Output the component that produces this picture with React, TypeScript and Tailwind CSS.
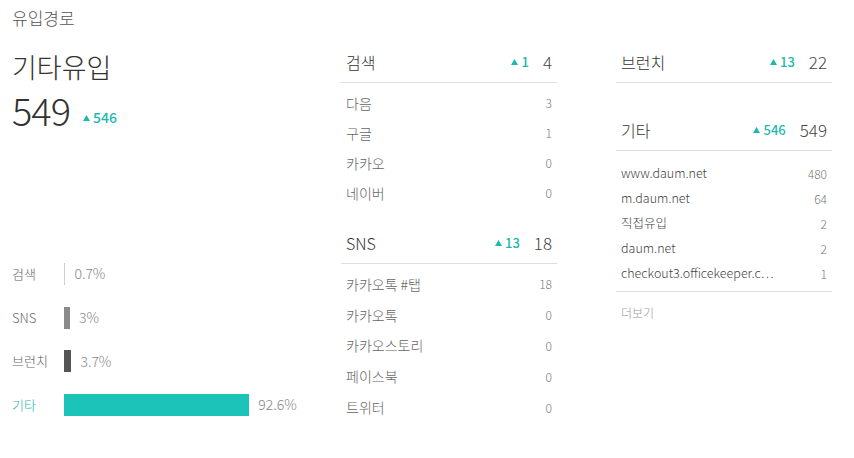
import React from "react";

// ---- 유입경로 데이터 ----
interface Row {
  label: string;
  value: number;
}

interface Section {
  title: string;
  diff?: number;
  total: number;
  rows: Row[];
}

const bars = [
  { label: "검색", pct: 0.7, color: "bg-[#cfcfcf]", text: "0.7%" },
  { label: "SNS", pct: 3, color: "bg-[#8a8a8a]", text: "3%" },
  { label: "브런치", pct: 3.7, color: "bg-[#555555]", text: "3.7%" },
  { label: "기타", pct: 92.6, color: "bg-[#1cc3b9]", text: "92.6%", active: true },
];

const search: Section = {
  title: "검색",
  diff: 1,
  total: 4,
  rows: [
    { label: "다음", value: 3 },
    { label: "구글", value: 1 },
    { label: "카카오", value: 0 },
    { label: "네이버", value: 0 },
  ],
};

const sns: Section = {
  title: "SNS",
  diff: 13,
  total: 18,
  rows: [
    { label: "카카오톡 #탭", value: 18 },
    { label: "카카오톡", value: 0 },
    { label: "카카오스토리", value: 0 },
    { label: "페이스북", value: 0 },
    { label: "트위터", value: 0 },
  ],
};

const etc: Row[] = [
  { label: "www.daum.net", value: 480 },
  { label: "m.daum.net", value: 64 },
  { label: "직접유입", value: 2 },
  { label: "daum.net", value: 2 },
  { label: "checkout3.officekeeper.c\u22EF", value: 1 },
];

function Up({ n, big }: { n: number; big?: boolean }) {
  return (
    <span
      className={`flex items-center gap-[3px] text-[#1cb9b0] font-medium ${
        big ? "text-[14px]" : "text-[13px]"
      }`}
    >
      <svg width="7" height="6" viewBox="0 0 7 6">
        <path d="M3.5 0L7 6H0z" fill="#1cb9b0" />
      </svg>
      {n}
    </span>
  );
}

function Header({ title, diff, total }: { title: string; diff?: number; total: number }) {
  return (
    <div className="h-[42px] px-[5px] flex items-center justify-between border-b border-[#dddddd]">
      <span className="text-[16px] font-light text-[#333]">{title}</span>
      <span className="flex items-center gap-[14px]">
        {diff !== undefined && <Up n={diff} />}
        <span className="text-[17px] font-light text-[#444]">{total}</span>
      </span>
    </div>
  );
}

function ListSection({ s, rowH }: { s: Section; rowH: string }) {
  return (
    <div>
      <Header title={s.title} diff={s.diff} total={s.total} />
      <div className="pt-[5px]">
        {s.rows.map((r) => (
          <div key={r.label} className={`${rowH} px-[5px] flex items-center justify-between`}>
            <span className="text-[14px] font-light text-[#666]">{r.label}</span>
            <span className="text-[12px] font-light text-[#777]">{r.value}</span>
          </div>
        ))}
      </div>
    </div>
  );
}

export default function App() {
  return (
    <div className="w-[854px] h-[458px] bg-white px-3 pt-[7px] font-['Noto_Sans_CJK_KR','Noto_Sans',sans-serif] overflow-hidden">
      <div className="text-[17px] leading-[22px] font-light text-[#555]">유입경로</div>

      <div className="flex mt-[12px]">
        {/* 왼쪽: 요약 + 막대 */}
        <div className="w-[329px]">
          <div className="pt-[9px] text-[27px] leading-[34px] font-light text-[#333]">기타유입</div>
          <div className="flex items-end gap-[13px] h-[46px]">
            <span className="text-[38px] leading-[40px] font-light text-[#333] tracking-[-1px]">549</span>
            <span className="pb-[2px]">
              <Up n={546} big />
            </span>
          </div>

          <div className="mt-[122px]">
            {bars.map((b) => (
              <div key={b.label} className="h-[43.7px] flex items-center">
                <span
                  className={`w-[52px] text-[13px] font-light ${b.active ? "text-[#1cb9b0]" : "text-[#666]"}`}
                >
                  {b.label}
                </span>
                <span
                  className={`h-[22px] ${b.color}`}
                  style={{ width: Math.max(1, b.pct * 2) }}
                />
                <span className="ml-[9px] text-[14px] font-light text-[#888]">{b.text}</span>
              </div>
            ))}
          </div>
        </div>

        {/* 가운데: 검색 / SNS */}
        <div className="w-[216px]">
          <ListSection s={search} rowH="h-[30px]" />
          <div className="mt-[14px]">
            <ListSection s={sns} rowH="h-[30.8px]" />
          </div>
        </div>

        {/* 오른쪽: 브런치 / 기타 */}
        <div className="w-[216px] ml-[59px]">
          <Header title="브런치" diff={13} total={22} />
          <div className="mt-[26px]">
            <Header title="기타" diff={546} total={549} />
          </div>
          <div className="pt-[10px] pb-[5px] border-b border-[#dddddd]">
            {etc.map((r) => (
              <div key={r.label} className="h-[25px] px-[5px] flex items-center justify-between">
                <span className="text-[12.5px] font-light text-[#444]">{r.label}</span>
                <span className="text-[12px] font-light text-[#777]">{r.value}</span>
              </div>
            ))}
          </div>
          <div className="pt-[12px] px-[5px] text-[12px] font-light text-[#999]">더보기</div>
        </div>
      </div>
    </div>
  );
}
